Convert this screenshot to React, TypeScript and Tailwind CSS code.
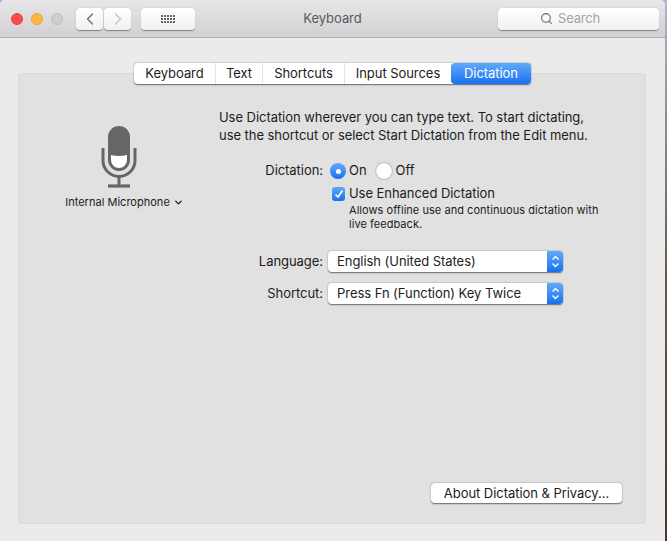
import { ChevronDown, ChevronLeft, ChevronRight, Search } from 'lucide-react';

const tabs = [
  { name: 'Keyboard', cls: 'w-[82px] text-center border-r border-[#e4e4e4]' },
  { name: 'Text', cls: 'w-[47px] text-center border-r border-[#e4e4e4]' },
  { name: 'Shortcuts', cls: 'w-[82px] text-center border-r border-[#e4e4e4]' },
  { name: 'Input Sources', cls: 'w-[106px] text-center' },
  { name: 'Dictation', cls: 'w-[80px] text-center text-white rounded-[4px] bg-gradient-to-b from-[#60a9fb] to-[#1470f0]' },
];

function Select({ label, value }: { label: string; value: string }) {
  return (
    <div className="flex items-center h-[21px]">
      <div className="w-[109px] text-right pr-[5px] text-[13px] text-[#1c1c1c]">{label}</div>
      <div className="w-[235px] h-[21px] flex bg-white rounded-[4px] shadow-[0_0.5px_1.5px_rgba(0,0,0,0.55)] overflow-hidden">
        <div className="flex-1 pl-[9px] text-[13px] leading-[21px] text-[#222]">{value}</div>
        <div className="w-[16px] bg-gradient-to-b from-[#60a9fb] to-[#1470f0] flex items-center justify-center">
          <svg width="9" height="15" viewBox="0 0 9 15" fill="none" stroke="#fff" strokeWidth="1.4">
            <path d="M1.5 5.5 L4.5 2.5 L7.5 5.5" />
            <path d="M1.5 9.5 L4.5 12.5 L7.5 9.5" />
          </svg>
        </div>
      </div>
    </div>
  );
}

function Mic() {
  return (
    <svg width="36" height="62" viewBox="0 0 36 62" className="block">
      <rect x="7" y="0" width="22" height="45" rx="11" fill="#666" />
      <path d="M10 29 Q18 31 26 29 v5 a8 8 0 0 1 -16 0 z" fill="#fff" />
      <path d="M2 22 v12.5 a16 16 0 0 0 32 0 v-12.5" fill="none" stroke="#666" strokeWidth="3" />
      <path d="M18 50 v10" stroke="#666" strokeWidth="3" />
      <path d="M7 60 h22" stroke="#666" strokeWidth="3.2" />
    </svg>
  );
}

export default function App() {
  return (
    <div className="w-[667px] h-[541px] bg-gradient-to-b from-[#a9b9cc] via-[#6b5a4a] to-[#4a3528] font-['Inter','Liberation_Sans',sans-serif] tracking-[-0.05px] overflow-hidden">
      <div className="w-[665px] h-[541px] bg-[#ebebeb] flex flex-col rounded-t-[5px]">
        {/* Titlebar */}
        <div className="relative h-[38px] shrink-0 flex items-center bg-gradient-to-b from-[#e8e6e8] to-[#d2d0d2] border-b border-[#b1b1b1] rounded-t-[5px]">
          <div className="flex gap-[8px] ml-[11px]">
            <span className="w-[12px] h-[12px] rounded-full bg-[#fc4d4d] border border-[#e6423f]" />
            <span className="w-[12px] h-[12px] rounded-full bg-[#fdb83c] border border-[#e5a12e]" />
            <span className="w-[12px] h-[12px] rounded-full bg-[#cdcdcd] border border-[#bdbdbd]" />
          </div>
          <div className="flex gap-[1px] ml-[13px]">
            <div className="w-[27px] h-[22px] rounded-[4px] bg-gradient-to-b from-white to-[#f1f1f1] shadow-[0_0.5px_1px_rgba(0,0,0,0.4)] flex items-center justify-center text-[#6d6d6d]">
              <ChevronLeft size={20} strokeWidth={1.6} />
            </div>
            <div className="w-[27px] h-[22px] rounded-[4px] bg-gradient-to-b from-white to-[#f1f1f1] shadow-[0_0.5px_1px_rgba(0,0,0,0.4)] flex items-center justify-center text-[#c4c4c4]">
              <ChevronRight size={20} strokeWidth={1.6} />
            </div>
          </div>
          <div className="ml-[10px] w-[54px] h-[22px] rounded-[4px] bg-gradient-to-b from-white to-[#f1f1f1] shadow-[0_0.5px_1px_rgba(0,0,0,0.4)] flex items-center justify-center">
            <div className="grid grid-cols-5 gap-[1px]">
              {Array.from({ length: 15 }).map((_, i) => (
                <span key={i} className="w-[2px] h-[2px] bg-[#666]" />
              ))}
            </div>
          </div>
          <div className="flex-1 text-center text-[13px] text-[#5a5a5a] pr-[28px]">Keyboard</div>
          <div className="mr-[6px] w-[161px] h-[22px] rounded-[4px] bg-gradient-to-b from-white to-[#f1f1f1] shadow-[0_0.5px_1px_rgba(0,0,0,0.4)] flex items-center gap-[5px] pl-[42px] text-[13px] tracking-[-0.2px] text-[#a3a3a3]">
            <Search size={13} className="text-[#666]" />
            <span>Search</span>
          </div>
        </div>

        {/* Panel */}
        <div className="relative ml-[18px] w-[628px] mt-[35px] h-[451px] bg-[#e1e1e1] border border-[#dadada] rounded-[4px]">
          <div className="absolute -top-[11px] left-[115px] flex h-[21px] bg-white rounded-[4px] shadow-[0_0.5px_1.5px_rgba(0,0,0,0.55)] text-[13px] leading-[21px] text-[#1c1c1c]">
            {tabs.map((t) => (
              <div key={t.name} className={t.cls}>
                {t.name}
              </div>
            ))}
          </div>

          <div className="flex pt-[34px] h-full">
            {/* Left column */}
            <div className="w-[200px] shrink-0 flex flex-col items-center pt-[18px]">
              <Mic />
              <div className="mt-[6px] pl-[11px] flex items-center gap-[3px] text-[11px] tracking-[0.02px] text-[#1c1c1c] whitespace-nowrap">
                Internal Microphone <ChevronDown size={11} strokeWidth={3} />
              </div>
            </div>

            {/* Right column */}
            <div className="flex-1 flex flex-col">
              <p className="text-[13px] leading-[18px] text-[#1c1c1c] whitespace-nowrap">
                Use Dictation wherever you can type text. To start dictating,<br />
                use the shortcut or select Start Dictation from the Edit menu.
              </p>
              <div className="flex items-center mt-[17px] h-[20px]">
                <div className="w-[104px] text-right text-[13px] text-[#1c1c1c]">Dictation:</div>
                <span className="ml-[7px] w-[16px] h-[16px] rounded-full bg-gradient-to-b from-[#60a9fb] to-[#1470f0] flex items-center justify-center">
                  <span className="w-[5px] h-[5px] rounded-full bg-white" />
                </span>
                <span className="ml-[3px] text-[13px] text-[#1c1c1c]">On</span>
                <span className="ml-[9px] w-[16px] h-[16px] rounded-full bg-white shadow-[0_0_1.5px_rgba(0,0,0,0.6)]" />
                <span className="ml-[4px] text-[13px] text-[#1c1c1c]">Off</span>
              </div>
              <div className="ml-[113px] mt-[4px] flex items-center h-[18px]">
                <span className="w-[13px] h-[14px] rounded-[3px] bg-gradient-to-b from-[#60a9fb] to-[#1470f0] flex items-center justify-center">
                  <svg width="10" height="10" viewBox="0 0 10 10"><path d="M1.5 5.5 L4 8 L8.5 1.5" fill="none" stroke="#fff" strokeWidth="1.6" /></svg>
                </span>
                <span className="ml-[4px] text-[13px] text-[#1c1c1c]">Use Enhanced Dictation</span>
              </div>
              <p className="ml-[130px] text-[11px] leading-[14px] tracking-[0.04px] text-[#1c1c1c] whitespace-nowrap">
                Allows offline use and continuous dictation with<br />live feedback.
              </p>
              <div className="mt-[20px] flex flex-col gap-[11px]">
                <Select label="Language:" value="English (United States)" />
                <Select label="Shortcut:" value="Press Fn (Function) Key Twice" />
              </div>
              <div className="mt-auto mb-[20px] self-end mr-[23px] w-[191px] h-[20px] bg-white rounded-[4px] shadow-[0_0.5px_1.5px_rgba(0,0,0,0.55)] text-center text-[13px] leading-[20px] text-[#1c1c1c]">
                About Dictation &amp; Privacy...
              </div>
            </div>
          </div>
        </div>
      </div>
    </div>
  );
}
